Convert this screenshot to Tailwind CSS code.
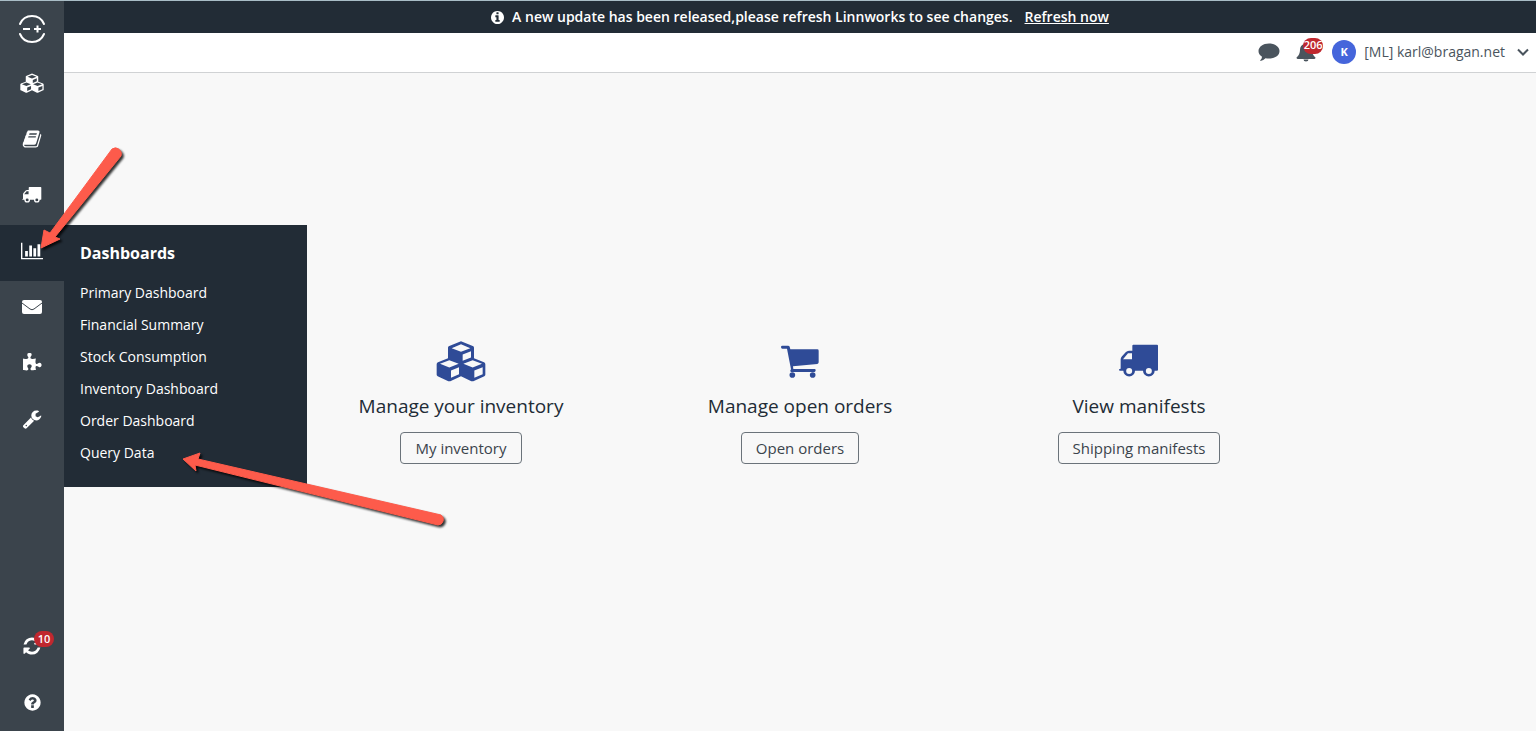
<!DOCTYPE html>
<html lang="en">
<head>
<meta charset="utf-8">
<meta name="viewport" content="width=device-width, initial-scale=1">
<title>Linnworks</title>
<script src="https://cdn.jsdelivr.net/npm/@tailwindcss/browser@4"></script>
</head>
<body class="min-h-screen flex flex-col border-t border-[#a9bdc6] bg-[#f8f8f8] font-['Open_Sans',sans-serif] text-[#222c36]">

<svg class="hidden" aria-hidden="true">
  <symbol id="cubes" viewBox="0 0 150 125">
    <path fill="currentColor" fill-rule="evenodd" d="M75 3 L112 18 Q114 20 114 23 V54 L144 66 Q148 68 148 72 V104 Q148 107 145 108 L112 123 Q109 124 106 123 L75 108 L43 123 Q40 124 37 123 L5 108 Q2 107 2 104 V72 Q2 68 6 66 L36 54 V23 Q36 20 38 18 Z
    M47 24 L75 35 L103 24 L75 12 Z M80 43 V62 L105 52 V33 Z
    M12 71 L40 82 L68 71 L40 60 Z M45 91 V113 L69 102 V81 Z
    M82 71 L110 82 L138 71 L110 60 Z M115 91 V113 L140 102 V81 Z"/>
  </symbol>
  <symbol id="truck" viewBox="0 0 120 98">
    <path fill="currentColor" fill-rule="evenodd" d="M43 0 H114 Q117 0 117 3 V75 Q117 78 114 78 H107 A17 17 0 0 1 72 78 H48 A17 17 0 0 1 13 78 H3 Q0 78 0 75 Q0 72 5 72 V44 Q5 39 9 35 L20 23 Q24 18 30 18 H40 V3 Q40 0 43 0 Z M12 44 H39 V26 H27 Z
    M21.500 79 a9 9 0 1 0 18 0 a9 9 0 1 0 -18 0 Z M80.500 79 a9 9 0 1 0 18 0 a9 9 0 1 0 -18 0 Z"/>
  </symbol>
</svg>

<div class="flex flex-1">
  <nav class="relative z-10 flex w-16 shrink-0 flex-col bg-[#3b444c] text-white" aria-label="Main">
    <a href="#" aria-label="Home" class="flex h-14 items-center justify-center">
      <svg class="size-7" viewBox="0 0 28 28" fill="none" stroke="currentColor" stroke-width="2" stroke-linecap="round"><path d="M2 9 A13 13 0 0 1 26 9 M2 19 A13 13 0 0 0 26 19"/><path stroke-linecap="butt" d="M5 14 H12 M16 14 H23 M19.500 10.500 V17.500"/></svg>
    </a>
    <a href="#" aria-label="Inventory" class="flex h-14 items-center justify-center pb-1"><svg class="h-5 w-6"><use href="#cubes"/></svg></a>
    <a href="#" aria-label="Orders" class="flex h-14 items-center justify-center pb-1"><svg class="size-5" viewBox="0 0 1792 1792" fill="currentColor"><path d="M1703 478q40 57 18 129l-275 906q-19 64-76.500 107.500t-122.500 43.500h-923q-77 0-148.500-53.500t-99.500-131.500q-24-67-2-127 0-4 3-27t4-37q1-8-3-21.500t-3-19.500q2-11 8-21t16.500-23.500 16.500-23.500q23-38 45-91.500t30-91.500q3-10 .5-30t-.5-28q3-11 17-28t17-23q21-36 42-92t25-90q1-9-2.500-32t.5-28q4-13 22-30.500t22-22.500q19-26 42.500-84.500t27.500-96.500q1-8-3-25.500t-2-26.500q2-8 9-18t18-23 17-21q8-12 16.500-30.500t15-35 16-36 19.500-32 26.500-23.500 36-11.500 47.500 5.500l-1 3q38-9 51-9h761q74 0 114 56t18 130l-274 906q-36 119-71.500 153.500t-128.500 34.500h-869q-27 0-38 15-11 16-1 43 24 70 144 70h923q29 0 56-15.500t35-41.500l300-987q7-22 5-57 38 15 59 43zm-1064 2q-4 13 2 22.500t20 9.500h608q13 0 25.500-9.500t16.500-22.500l21-64q4-13-2-22.500t-20-9.500h-608q-13 0-25.500 9.500t-16.500 22.500zm-83 256q-4 13 2 22.500t20 9.500h608q13 0 25.500-9.500t16.500-22.500l21-64q4-13-2-22.500t-20-9.500h-608q-13 0-25.500 9.500t-16.500 22.500z"/></svg></a>
    <a href="#" aria-label="Shipping" class="flex h-14 items-center justify-center pb-1"><svg class="h-4 w-5"><use href="#truck"/></svg></a>
    <div class="relative">
      <a href="#" aria-label="Dashboards" class="flex h-14 items-center justify-center bg-[#222c36] pb-1"><svg class="h-5 w-[22px]" viewBox="0 0 2048 1792" fill="currentColor"><path d="M640 896v512h-256v-512h256zm384-512v1024h-256v-1024h256zm1024 1152v128h-2048v-1536h128v1408h1920zm-640-896v768h-256v-768h256zm384-384v1152h-256v-1152h256z"/></svg></a>
      <div class="absolute left-16 top-0 w-[243px] bg-[#222c36] px-4 pt-3 pb-[18px]">
        <h2 class="mb-2 text-base leading-8 font-bold">Dashboards</h2>
        <ul class="text-sm leading-8">
          <li><a href="#">Primary Dashboard</a></li>
          <li><a href="#">Financial Summary</a></li>
          <li><a href="#">Stock Consumption</a></li>
          <li><a href="#">Inventory Dashboard</a></li>
          <li><a href="#">Order Dashboard</a></li>
          <li><a href="#">Query Data</a></li>
        </ul>
      </div>
    </div>
    <a href="#" aria-label="Email" class="flex h-14 items-center justify-center pb-1"><svg class="h-4 w-5" viewBox="0 0 20 16"><rect y="1" width="20" height="14" rx="2" fill="currentColor"/><path d="M0 4 L8 10 Q10 11.500 12 10 L20 4" fill="none" stroke="#3b444c"/></svg></a>
    <a href="#" aria-label="Apps" class="flex h-14 items-center justify-center pb-1"><svg class="size-5" viewBox="0 0 1792 1792" fill="currentColor"><path d="M1755 1083q0 81-44.500 135t-123.500 54q-41 0-77.500-17.500t-59-38-56.500-38-71-17.500q-110 0-110 124 0 39 16 115t15 115v5q-22 0-33 1-34 3-97.500 11.500t-115.500 13.500-98 5q-61 0-103-26.500t-42-83.500q0-37 17.500-71t38-56.500 38-59 17.500-77.500q0-79-54-123.500t-135-44.500q-84 0-143 45.500t-59 127.500q0 43 15 83t33.500 64.500 33.500 53 15 50.500q0 45-46 89-37 35-117 35-95 0-245-24-9-2-27.500-4t-27.500-4l-13-2q-1 0-3-1-2 0-2-1v-1024q2 1 17.500 3.500t34 5 21.500 3.500q150 24 245 24 80 0 117-35 46-44 46-89 0-22-15-50.500t-33.500-53-33.500-64.500-15-83q0-82 59-127.500t144-45.500q80 0 134 44.500t54 123.500q0 41-17.500 77.500t-38 59-38 56.500-17.500 71q0 57 42 83.500t103 26.500q64 0 180-15t163-17v2q-1 2-3.500 17.500t-5 34-3.500 21.500q-24 150-24 245 0 80 35 117 44 46 89 46 22 0 50.500-15t53-33.500 64.500-33.500 83-15q82 0 127.500 59t45.500 143z"/></svg></a>
    <a href="#" aria-label="Settings" class="flex h-14 items-center justify-center pb-1"><svg class="size-5" viewBox="0 0 1792 1792" fill="currentColor"><path d="M448 1472q0-26-19-45t-45-19-45 19-19 45 19 45 45 19 45-19 19-45zm644-420l-682 682q-37 37-90 37-52 0-91-37l-106-108q-38-36-38-90 0-53 38-91l681-681q39 98 114.500 173.500t173.500 114.500zm634-435q0 39-23 106-47 134-164.500 217.500t-258.500 83.500q-185 0-316.500-131.500t-131.500-316.500 131.500-316.500 316.500-131.500q58 0 121.500 16.500t107.500 46.500q16 11 16 28t-16 28l-293 169v224l193 107q5-3 79-48.500t135.500-81 70.500-35.500q15 0 23.500 10t8.500 25z"/></svg></a>
    <div class="mt-auto">
      <a href="#" aria-label="Sync, 10 pending" class="relative flex h-14 items-center justify-center pb-0.5"><svg class="size-5" viewBox="0 0 1792 1792" fill="currentColor"><path d="M1639 1056q0 5-1 7-64 268-268 434.500t-478 166.500q-146 0-282.500-55t-243.500-157l-129 129q-19 19-45 19t-45-19-19-45v-448q0-26 19-45t45-19h448q26 0 45 19t19 45-19 45l-137 137q71 66 161 102t187 36q134 0 250-65t186-179q11-17 53-117 8-23 30-23h192q13 0 22.500 9.500t9.500 22.500zm25-800v448q0 26-19 45t-45 19h-448q-26 0-45-19t-19-45 19-45l138-138q-148-137-349-137-134 0-250 65t-186 179q-11 17-53 117-8 23-30 23h-199q-13 0-22.500-9.500t-9.500-22.500v-7q65-268 270-434.500t480-166.500q146 0 284 55.500t245 156.500l130-129q19-19 45-19t45 19 19 45z"/></svg>
        <span class="absolute left-[34px] top-3 flex h-4 w-5 items-center justify-center rounded-full bg-[#c0282f] text-[11px] font-semibold">10</span></a>
      <a href="#" aria-label="Help" class="flex h-14 items-center justify-center pb-0.5"><svg class="size-[19px]" viewBox="0 0 1792 1792" fill="currentColor"><path d="M1024 1376v-192q0-14-9-23t-23-9h-192q-14 0-23 9t-9 23v192q0 14 9 23t23 9h192q14 0 23-9t9-23zm256-672q0-88-55.500-163t-138.500-116-170-41q-243 0-371 213-15 24 8 42l132 100q7 6 19 6 16 0 25-12 53-68 86-92 34-24 86-24 48 0 85.500 26t37.500 59q0 38-20 61t-68 45q-63 28-115.500 86.500t-52.500 125.500v36q0 14 9 23t23 9h192q14 0 23-9t9-23q0-19 21.500-49.500t54.500-49.500q32-18 49-28.500t46-35 44.500-48 28-60.500 12.500-81zm384 192q0 209-103 385.500t-279.500 279.500-385.500 103-385.500-103-279.500-279.500-103-385.500 103-385.500 279.500-279.500 385.500-103 385.500 103 279.500 279.500 103 385.500z"/></svg></a>
    </div>
  </nav>

  <div class="flex min-w-0 flex-1 flex-col">
    <div role="status" class="flex h-8 items-center justify-center bg-[#222c36] text-sm font-semibold text-white">
      <svg class="mr-2 size-[13px]" viewBox="128 128 1536 1536" fill="currentColor"><path d="M1152 1376v-160q0-14-9-23t-23-9h-96v-512q0-14-9-23t-23-9h-320q-14 0-23 9t-9 23v160q0 14 9 23t23 9h96v320h-96q-14 0-23 9t-9 23v160q0 14 9 23t23 9h448q14 0 23-9t9-23zm-128-896v-160q0-14-9-23t-23-9h-192q-14 0-23 9t-9 23v160q0 14 9 23t23 9h192q14 0 23-9t9-23zm640 416q0 209-103 385.500t-279.500 279.500-385.500 103-385.500-103-279.500-279.500-103-385.500 103-385.500 279.500-279.500 385.500-103 385.500 103 279.500 279.500 103 385.500z"/></svg>
      <span>A new update has been released,please refresh Linnworks to see changes.</span>
      <a href="#" class="ml-3 underline">Refresh now</a>
    </div>
    <header class="flex h-10 items-center justify-end border-b border-[#d0d2d4] bg-white pr-[7px] pb-0.5 text-[#4a545d]">
      <button aria-label="Chat"><svg class="h-5 w-[22px]" viewBox="0 0 22 20" fill="currentColor"><path d="M11 1.500 C17 1.500 21.500 5 21.500 9 C21.500 13.500 17 16.500 11 16.500 Q9 16.500 7.500 16.200 Q5.500 18.500 2.500 19 Q2 18.500 2.500 18 Q4 16.500 4 14.800 Q0.500 12.500 0.500 9 C0.500 5 5 1.500 11 1.500 Z"/></svg></button>
      <button aria-label="Notifications, 206 unread" class="relative ml-4"><svg class="h-5 w-5" viewBox="0 0 20 20" fill="currentColor"><path d="M8.500 2 Q8.500 0.500 10 0.500 T11.500 2 Q16 3 16 8 Q16 12.500 19.500 15.500 Q19.500 17 18 17 H2 Q0.500 17 0.500 15.500 Q4 12.500 4 8 Q4 3 8.500 2 Z M7.500 17.500 H12.500 Q12.500 19.500 10 19.500 T7.500 17.500 Z"/></svg>
        <span class="absolute -top-1 left-[7px] flex h-4 w-5 items-center justify-center rounded-full bg-[#c0282f] text-[11px] font-semibold text-white">206</span></button>
      <button class="ml-4 flex items-center text-sm">
        <span class="mr-2 flex size-6 items-center justify-center rounded-full bg-[#4565db] text-[11px] font-bold text-white">K</span>
        <span>[ML] karl@bragan.net</span>
        <svg class="ml-3 h-2 w-3" viewBox="0 0 12 8" fill="none" stroke="currentColor" stroke-width="2"><path d="M1 1.500 L6 6.500 L11 1.500"/></svg>
      </button>
    </header>
    <main class="flex flex-1 items-center justify-center">
      <div class="grid w-full max-w-[1017px] grid-cols-3">
        <section class="flex flex-col items-center">
          <svg class="h-[42px] w-[50px] text-[#2f4b97]"><use href="#cubes"/></svg>
          <h2 class="mt-3 mb-[14px] text-[19px] leading-6 font-medium">Manage your inventory</h2>
          <button class="h-8 rounded border border-[#6b737a] px-[14px] text-[15px] font-medium text-[#3b444c]">My inventory</button>
        </section>
        <section class="flex flex-col items-center">
          <svg class="h-[42px] w-[38px] text-[#2f4b97]" viewBox="0 0 114 126" fill="currentColor"><path d="M4 17 H21 Q25 17 26 20 L28 28 H109 Q113 28 113 32 V67 Q113 71 109 72 L36 79 L37 87 H101 Q104 87 104 91 T101 96 H31 Q28 96 28 92 Q28 90 30 88 L18 26 H4 Q0 26 0 21 Q0 17 4 17 Z"/><circle cx="34" cy="105" r="8.500"/><circle cx="95" cy="105" r="8.500"/></svg>
          <h2 class="mt-3 mb-[14px] text-[19px] leading-6 font-medium">Manage open orders</h2>
          <button class="h-8 rounded border border-[#6b737a] px-[14px] text-[15px] font-medium text-[#3b444c]">Open orders</button>
        </section>
        <section class="flex flex-col items-center">
          <svg class="h-[42px] w-10 text-[#2f4b97]"><use href="#truck"/></svg>
          <h2 class="mt-3 mb-[14px] text-[19px] leading-6 font-medium">View manifests</h2>
          <button class="h-8 rounded border border-[#6b737a] px-[14px] text-[15px] font-medium text-[#3b444c]">Shipping manifests</button>
        </section>
      </div>
    </main>
  </div>
</div>

<!-- Callout arrows drawn over the page -->
<svg class="pointer-events-none absolute left-0 top-0 z-20 h-[560px] w-[480px] drop-shadow-[2px_2px_1px_rgb(0_0_0/0.8)]" viewBox="0 0 480 560" fill="#fd5b4b" stroke="#fd5b4b" stroke-linejoin="round" aria-hidden="true">
  <path d="M41 248 L44 230 L50 233 L112 149 A6 6 0 0 1 121 156 L55 237 L60 239 Z"/>
  <path d="M183 459 L200 453 L198 459 L441 515 A5.500 5.500 0 0 1 438 525 L195 465 L196 471 Z"/>
</svg>
</body>
</html>
